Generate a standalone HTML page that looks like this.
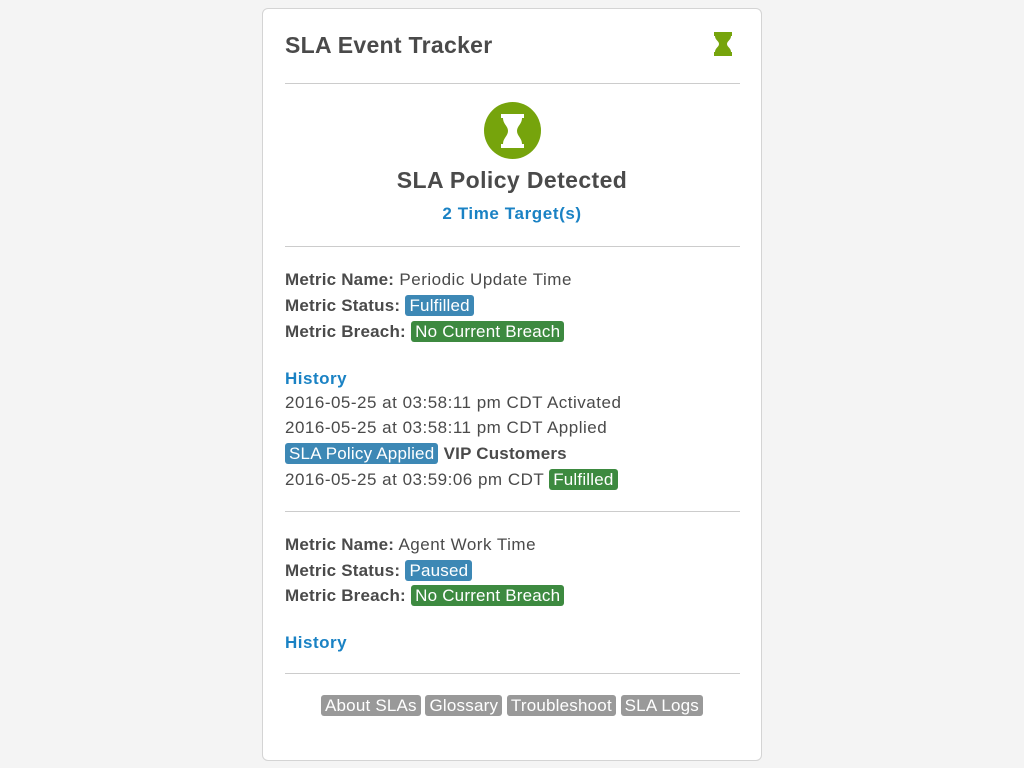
<!DOCTYPE html>
<html><head><style>
body{margin:0;background:#f4f4f4;font-family:"Liberation Sans",sans-serif;color:#4a4a4a;}
.card{position:absolute;left:262px;top:8px;width:498px;height:751px;background:#fff;border:1px solid #d4d4d4;border-radius:6px;}
.abs{position:absolute;white-space:nowrap;}
hr{position:absolute;left:22px;width:455px;border:0;border-top:1px solid #ccc;margin:0;}
.l{font-size:17px;left:22px;line-height:22px;letter-spacing:0.5px;}
b{font-weight:bold;letter-spacing:0.2px;}
.bd{display:inline-block;color:#fff;border-radius:3px;padding:0 4px;line-height:21px;letter-spacing:0.2px;}
.bl{background:#3d88b5}.gr{background:#3d8a40}.gy{background:#999;}
.lk{color:#1a82c4;font-weight:bold;}
</style></head><body>
<div class="card">
<div class="abs" style="left:22px;top:23px;font-size:23px;font-weight:bold;letter-spacing:0.3px;">SLA Event Tracker</div>
<svg class="abs" style="left:450px;top:23px" width="20" height="24" viewBox="0 0 20 24"><path d="M1 0h18v4h-1c0 4-4 5-4 8s4 4 4 8h1v4H1v-4h1c0-4 4-5 4-8S2 8 2 4H1z" fill="#76a40c"/></svg>
<hr style="top:74px">
<div class="abs" style="left:221px;top:93px;width:57px;height:57px;border-radius:50%;background:#76a40c"></div>
<svg class="abs" style="left:237px;top:105px" width="25" height="34" viewBox="0 0 25 34"><path d="M1 0h23v4h-2c0 6-5 8-5 13s5 7 5 13h2v4H1v-4h2c0-6 5-8 5-13S3 10 3 4H1z" fill="#fff"/></svg>
<div class="abs" style="left:0;width:498px;text-align:center;top:158px;font-size:23px;font-weight:bold;letter-spacing:0.4px;">SLA Policy Detected</div>
<div class="abs lk" style="left:0;width:498px;text-align:center;top:195px;font-size:17px;letter-spacing:0.6px;">2 Time Target(s)</div>
<hr style="top:237px">
<div class="abs l" style="top:260px"><b>Metric Name:</b> Periodic Update Time</div>
<div class="abs l" style="top:286px"><b>Metric Status:</b> <span class="bd bl">Fulfilled</span></div>
<div class="abs l" style="top:312px"><b>Metric Breach:</b> <span class="bd gr">No Current Breach</span></div>
<div class="abs l lk" style="top:359px">History</div>
<div class="abs l" style="top:383px">2016-05-25 at 03:58:11 pm CDT Activated</div>
<div class="abs l" style="top:408px">2016-05-25 at 03:58:11 pm CDT Applied</div>
<div class="abs l" style="top:434px"><span class="bd bl">SLA Policy Applied</span> <b>VIP Customers</b></div>
<div class="abs l" style="top:460px">2016-05-25 at 03:59:06 pm CDT <span class="bd gr">Fulfilled</span></div>
<hr style="top:502px">
<div class="abs l" style="top:525px"><b>Metric Name:</b> Agent Work Time</div>
<div class="abs l" style="top:551px"><b>Metric Status:</b> <span class="bd bl">Paused</span></div>
<div class="abs l" style="top:576px"><b>Metric Breach:</b> <span class="bd gr">No Current Breach</span></div>
<div class="abs l lk" style="top:623px">History</div>
<hr style="top:664px">
<div class="abs" style="left:0;width:498px;text-align:center;top:686px;font-size:17px;line-height:22px;"><span class="bd gy">About SLAs</span> <span class="bd gy">Glossary</span> <span class="bd gy">Troubleshoot</span> <span class="bd gy">SLA Logs</span></div>
</div>
</body></html>
